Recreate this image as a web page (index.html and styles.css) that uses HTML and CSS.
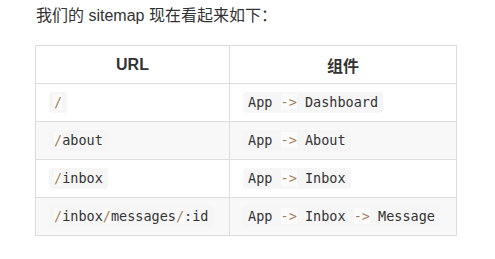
FILE: index.html
```html
<!DOCTYPE html>
<html lang="zh">
<head>
<meta charset="utf-8">
<link rel="stylesheet" href="styles.css">
</head>
<body>
<div class="page">
  <p class="intro">我们的 sitemap 现在看起来如下：</p>
  <table class="map">
    <colgroup><col class="c1"><col class="c2"></colgroup>
    <thead>
      <tr><th>URL</th><th>组件</th></tr>
    </thead>
    <tbody>
      <tr><td><code><span class="op">/</span></code></td><td><code>App <span class="op">-&gt;</span> Dashboard</code></td></tr>
      <tr><td><code><span class="op">/</span>about</code></td><td><code>App <span class="op">-&gt;</span> About</code></td></tr>
      <tr><td><code><span class="op">/</span>inbox</code></td><td><code>App <span class="op">-&gt;</span> Inbox</code></td></tr>
      <tr><td><code><span class="op">/</span>inbox<span class="op">/</span>messages<span class="op">/</span>:id</code></td><td><code>App <span class="op">-&gt;</span> Inbox <span class="op">-&gt;</span> Message</code></td></tr>
    </tbody>
  </table>
</div>
</body>
</html>
```
FILE: styles.css
```css
html, body {
  margin: 0;
  padding: 0;
  background: #fff;
}
.page {
  padding: 4px 0 0 35px;
  font-family: "Liberation Sans", "Noto Sans CJK SC", sans-serif;
  color: #333;
}
.intro {
  margin: 0 0 17px 1px;
  font-size: 16px;
  line-height: 24px;
}
.map {
  border-collapse: collapse;
  width: 422px;
  table-layout: fixed;
}
.c1 { width: 194px; }
.map th, .map td {
  border: 1px solid #ddd;
  height: 38px;
  padding: 0 13px;
  box-sizing: border-box;
}
.map th {
  font-size: 16px;
  font-weight: bold;
  text-align: center;
  color: #333;
}
.map td {
  text-align: left;
}
.map tbody tr:nth-child(odd) td {
  background: #fff;
}
.map tbody tr:nth-child(even) td {
  background: #f8f8f8;
}
code {
  font-family: "DejaVu Sans Mono", monospace;
  font-size: 13.5px;
  line-height: 17px;
  display: inline-block;
  padding: 2px 5px;
  background: #f6f6f6;
  color: #333;
  border-radius: 3px;
}
.op {
  color: #a67f59;
  background: rgba(255, 255, 255, 0.5);
}
```
